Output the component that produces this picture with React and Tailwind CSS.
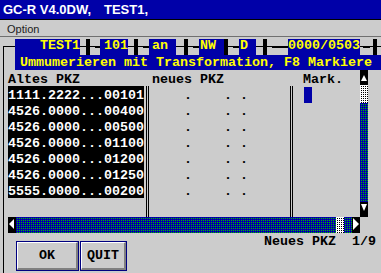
const mono = "font-['Liberation_Mono',monospace] font-bold text-[13.33px]";
const track =
  'bg-[image:linear-gradient(#0000a8_50%,transparent_50%),linear-gradient(90deg,#0000a8_50%,#00c000_50%)] bg-[length:2px_2px]';
const thumb =
  'bg-[image:linear-gradient(#fff_50%,transparent_50%),linear-gradient(90deg,#fff_50%,#000_50%)] bg-[length:2px_2px]';

const SEGS = [
  ['b', 'w-[65px] pl-[25px]', 'TEST1'],
  ['g', 'w-[6px]'], ['k', 'w-[4px]'], ['g', 'w-[5px]'], ['d', 'w-[5px]'],
  ['b', 'w-[28px] pl-[4px]', '101'],
  ['g', 'w-[6px]'], ['k', 'w-[4px]'], ['g', 'w-[5px]'], ['d', 'w-[6px]'],
  ['b', 'w-[27px] pl-[3px]', 'an'],
  ['g', 'w-[8px]'], ['k', 'w-[4px]'], ['g', 'w-[5px]'], ['d', 'w-[6px]'],
  ['b', 'w-[25px] pl-[1px]', 'NW'],
  ['k', 'w-[4px]'], ['g', 'w-[5px]'], ['d', 'w-[6px]'],
  ['b', 'w-[17px] pl-[1px]', 'D'],
  ['g', 'w-[7px]'], ['k', 'w-[4px]'], ['g', 'w-[5px]'], ['d', 'w-[16px]'],
  ['b', 'w-[72px]', '0000/0503'],
  ['g', 'w-[3px]'], ['d', 'w-[7px]'], ['g', 'w-[3px]'], ['k', 'w-[4px]'], ['g', 'w-[4px]'],
];

const rows = [
  '1111.2222...00101',
  '4526.0000...00400',
  '4526.0000...00500',
  '4526.0000...01100',
  '4526.0000...01200',
  '4526.0000...01250',
  '5555.0000...00200',
];

const Seg = ({ seg }) => {
  const [kind, cls, text] = seg;
  if (kind === 'b')
    return <div className={`${cls} shrink-0 h-full bg-[#0000a8] text-[#ffff00] whitespace-pre leading-[14px]`}>{text}</div>;
  if (kind === 'k') return <div className={`${cls} shrink-0 h-full bg-black`} />;
  if (kind === 'd')
    return (
      <div className={`${cls} shrink-0 h-full pt-[8px]`}>
        <div className="h-px bg-black" />
      </div>
    );
  return <div className={`${cls} shrink-0 h-full`} />;
};

const DoubleLine = ({ cls }) => (
  <div className={`${cls} shrink-0 flex h-full`}>
    <div className="w-px bg-black" />
    <div className="w-px" />
    <div className="w-px bg-black" />
  </div>
);

const Button = ({ cls, label }) => (
  <div className={`${cls} h-[30px] border border-[#000080]`}>
    <div className="h-full border-t border-l border-white border-b-2 border-r-2 border-b-[#808080] border-r-[#808080] flex items-center justify-center leading-[16px] pt-[1px]">
      {label}
    </div>
  </div>
);

export default function App() {
  return (
    <div className={`w-[381px] h-[273px] overflow-hidden bg-[#cccccc] text-black ${mono}`}>
      <div className="h-[19px] bg-[#0000a8] text-white flex pl-[3px] font-['Liberation_Sans',Arial,sans-serif] font-bold text-[13px] leading-[19px]">
        <span className="w-[101px]">GC-R V4.0DW,</span>
        <span>TEST1,</span>
      </div>
      <div className="h-px bg-black" />
      <div className="h-[16px] pl-[7px] font-['Liberation_Sans',Arial,sans-serif] font-normal text-[11px] leading-[18px] text-[#202020]">
        Option
      </div>
      <div className="h-px bg-[#707070]" />

      <div className="mt-[9px] ml-[3px] w-[378px] h-[227px] border-l border-t border-black">
        <div className="-mt-[8px] ml-[11px] w-[366px]">
          <div className="h-[16px] flex">
            {SEGS.map((s, i) => (
              <Seg key={i} seg={s} />
            ))}
          </div>
          <div className="h-[15px] bg-[#0000a8] text-[#ffff00] pl-[5px] leading-[15px] whitespace-pre">
            Ummumerieren mit Transformation, F8 Markiere
          </div>
        </div>

        <div className="flex">
          <div className="w-[356px] flex flex-col">
            <div className="h-[16px] flex leading-[19px] whitespace-pre">
              <div className="w-[140px] pl-[4px]">Altes PKZ</div>
              <div className="w-[5px]" />
              <div className="w-[141px] pl-[3px]">neues PKZ</div>
              <div className="w-[3px]" />
              <div className="w-[67px] pl-[10px]">Mark.</div>
            </div>
            <div className="h-[131px] flex">
              <div className="w-[140px] pl-[4px] shrink-0">
                <div className="w-[136px] bg-black text-white">
                  {rows.map((r) => (
                    <div key={r} className="h-[16px] leading-[19px] whitespace-pre">{r}</div>
                  ))}
                </div>
              </div>
              <div className="w-[5px] shrink-0 pl-[2px] h-full">
                <DoubleLine cls="w-[3px]" />
              </div>
              <div className="w-[141px] shrink-0 pl-[3px]">
                {rows.map((r) => (
                  <div key={r} className="h-[16px] leading-[19px] whitespace-pre">{'    .    . .'}</div>
                ))}
              </div>
              <DoubleLine cls="w-[3px]" />
              <div className="w-[67px] shrink-0 pl-[11px] pt-[1px]">
                <div className="w-[8px] h-[16px] bg-[#0000a8]" />
              </div>
            </div>
          </div>

          <div className="w-[8px] h-[147px] flex flex-col">
            <div className="h-[15px] bg-black">
              <svg width="8" height="15" className="block">
                <polygon points="4,5 1,11 7,11" fill="#fff" />
              </svg>
            </div>
            <div className={`h-[18px] ${thumb}`} />
            <div className={`h-[99px] ${track}`} />
            <div className="h-[15px] bg-black">
              <svg width="8" height="15" className="block">
                <polygon points="1,2 7,2 4,9" fill="#fff" />
              </svg>
            </div>
          </div>
        </div>

        <div className="ml-[4px] w-[352px] h-[16px] flex">
          <div className="w-[8px] bg-black">
            <svg width="8" height="16" className="block">
              <polygon points="1,7 6,2 6,12" fill="#fff" />
            </svg>
          </div>
          <div className={`w-[320px] ${track}`} />
          <div className={`w-[8px] ${thumb}`} />
          <div className={`w-[8px] ${track}`} />
          <div className="w-[8px] bg-black">
            <svg width="8" height="16" className="block">
              <polygon points="1,1 7,7 1,13" fill="#fff" />
            </svg>
          </div>
        </div>

        <div className="flex">
          <div className="ml-[12px] mt-[8px] flex gap-[1px]">
            <Button cls="w-[63px]" label="OK" />
            <Button cls="w-[47px]" label="QUIT" />
          </div>
          <div className="ml-auto mr-[5px] h-[16px] leading-[17px] whitespace-pre">Neues PKZ  1/9</div>
        </div>
      </div>
    </div>
  );
}
